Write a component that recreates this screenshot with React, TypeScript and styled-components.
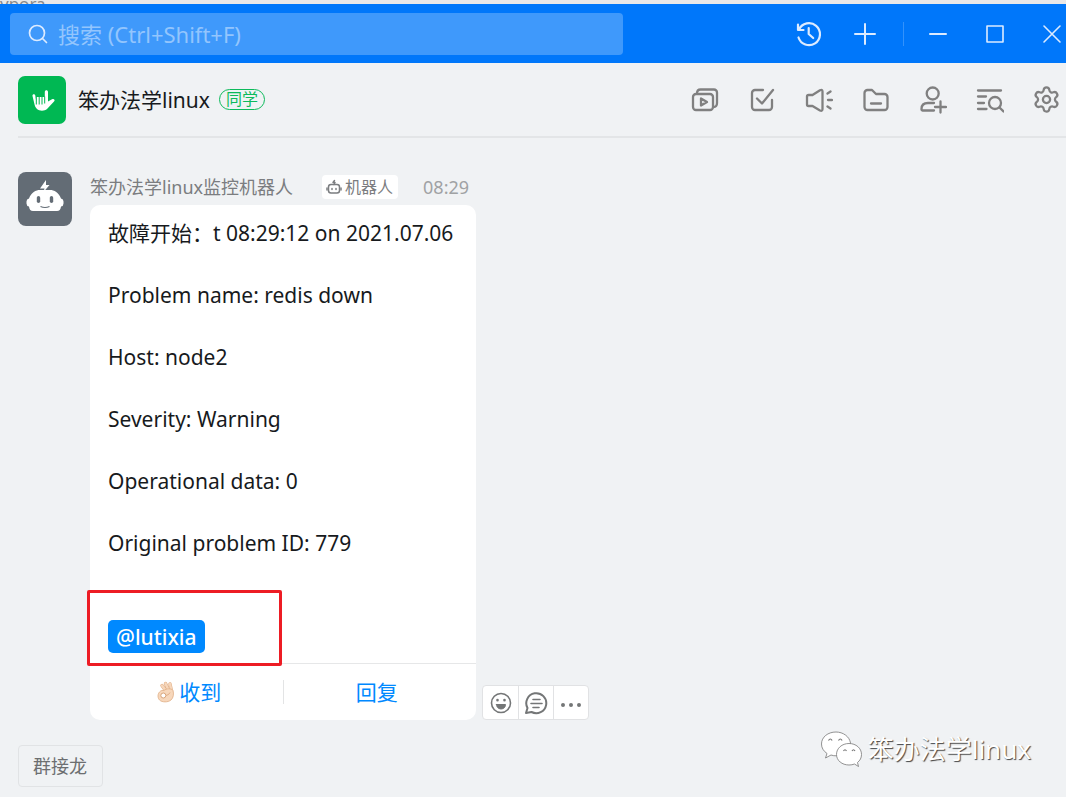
import React from "react";
import styled, { createGlobalStyle } from "styled-components";
import { Settings } from "lucide-react";

const Global = createGlobalStyle`
  * { box-sizing: border-box; }
  body {
    margin: 0;
    background: #f0f2f4;
    color: #171a1d;
    font-family: "Noto Sans", "Noto Sans CJK SC", sans-serif;
  }
  button, input { font: inherit; color: inherit; }
  svg { display: block; flex: none; }
`;

const Page = styled.div`
  min-height: 100vh;
  display: flex;
  flex-direction: column;
  position: relative;
  overflow: hidden;
`;

const BackWindow = styled.div`
  height: 4px;
  overflow: hidden;
  background: #e9e8e8;
  color: #8a8a8a;
  font-size: 17px;
  line-height: 8px;
`;

const TitleBar = styled.header`
  display: flex;
  align-items: center;
  justify-content: space-between;
  height: 59px;
  padding-left: 10px;
  background: #0077fa;
  color: #dcebff;
`;

const SearchBox = styled.label`
  flex: 0 1 613px;
  display: flex;
  align-items: center;
  gap: 10px;
  height: 42px;
  padding: 0 18px;
  border-radius: 4px;
  background: #3f99fb;
`;

const SearchInput = styled.input`
  flex: 1;
  min-width: 0;
  padding: 0;
  border: 0;
  outline: 0;
  background: transparent;
  font-size: 22px;
  &::placeholder { color: #93c5fd; opacity: 1; }
`;

const Controls = styled.div`
  display: flex;
  align-items: center;
  margin-right: -10px;
`;

const IconButton = styled.button<{ $w: number; $h?: number }>`
  display: flex;
  align-items: center;
  justify-content: center;
  width: ${(p) => p.$w}px;
  height: ${(p) => p.$h ?? 36}px;
  padding: 0;
  border: 0;
  background: transparent;
`;

const Separator = styled.span<{ $h: number; $color: string; $gap?: number }>`
  flex: none;
  width: 1px;
  height: ${(p) => p.$h}px;
  margin: 0 ${(p) => p.$gap ?? 0}px;
  background: ${(p) => p.$color};
`;

const ChatHeader = styled.div`
  display: flex;
  align-items: center;
  height: 75px;
  margin-left: 18px;
  border-bottom: 2px solid #e3e5e7;
`;

const ChatTitle = styled.h1`
  margin: 0 0 0 12px;
  font-size: 21px;
  line-height: 30px;
  font-weight: 400;
`;

const Pill = styled.span`
  margin-left: 9px;
  padding: 0 6px;
  border: 1px solid #0dba5b;
  border-radius: 11px;
  color: #0dba5b;
  font-size: 16px;
  line-height: 19px;
`;

const Tools = styled.div`
  display: flex;
  margin-left: auto;
  margin-right: -9px;
  color: #808080;
`;

const Message = styled.article`
  display: flex;
  gap: 18px;
  padding: 34px 18px 0;
`;

const MessageMain = styled.div`
  min-width: 0;
`;

const Meta = styled.div`
  display: flex;
  align-items: center;
  height: 30px;
  margin-bottom: 3px;
  color: #7b7d80;
  font-size: 18px;
  line-height: 26px;
`;

const BotTag = styled.span`
  display: flex;
  align-items: center;
  gap: 3px;
  height: 24px;
  margin-left: 29px;
  padding: 0 5px 0 4px;
  border-radius: 4px;
  background: #fff;
  font-size: 16px;
`;

const Time = styled.time`
  margin-left: 25px;
  color: #a0a2a4;
`;

const BubbleRow = styled.div`
  display: flex;
  align-items: flex-end;
  gap: 6px;
`;

const Bubble = styled.section`
  width: 386px;
  border-radius: 10px;
  background: #fff;
`;

const Body = styled.div`
  padding: 13px 18px 10px;
  border-bottom: 1px solid #e6e7e8;
  font-size: 21px;
  line-height: 31px;
`;

const Line = styled.p`
  margin: 0 0 31px;
  white-space: nowrap;
`;

const MentionLine = styled.div`
  position: relative;
  display: flex;
  margin-top: 61px;
`;

const Mention = styled.a`
  padding: 2px 8px 0;
  border-radius: 5px;
  background: #0089ff;
  color: #fff;
  font-weight: 500;
  text-decoration: none;
`;

const Highlight = styled.span`
  position: absolute;
  left: -21px;
  top: -30px;
  width: 195px;
  height: 76px;
  border: 3px solid #ed1c24;
  border-radius: 2px;
`;

const Actions = styled.div`
  display: flex;
  align-items: center;
  height: 56px;
`;

const Action = styled.button`
  flex: 1;
  display: flex;
  align-items: center;
  justify-content: center;
  gap: 4px;
  padding: 0;
  border: 0;
  background: transparent;
  color: #0089ff;
  font-size: 21px;
  line-height: 31px;
  &:first-child { padding-left: 6px; }
  &:last-child { padding-right: 6px; }
`;

const Reactions = styled.div`
  display: flex;
  border: 1px solid #e1e2e4;
  border-radius: 4px;
  background: #fff;
  color: #747677;
  button + button { border-left: 1px solid #e1e2e4; }
`;

const Footer = styled.footer`
  padding: 25px 18px 10px;
`;

const Shortcut = styled.button`
  height: 42px;
  padding: 0 15px 0 14px;
  border: 1px solid #e1e3e5;
  border-radius: 4px;
  background: transparent;
  color: #6c6e70;
  font-size: 18px;
  line-height: 26px;
`;

const Watermark = styled.div`
  position: absolute;
  right: 35px;
  bottom: 29px;
  display: flex;
  align-items: center;
  gap: 6px;
  color: #fff;
  font-size: 26px;
  line-height: 38px;
  text-shadow: 1px 1px 1px #444;
`;

const Draw = ({ children, size = 28, sw = 2 }: { children: React.ReactNode; size?: number; sw?: number }) => (
  <svg width={size} height={size} viewBox={`0 0 ${size} ${size}`} fill="none" stroke="currentColor"
    strokeWidth={sw} strokeLinecap="round" strokeLinejoin="round" aria-hidden="true">
    {children}
  </svg>
);

const tools = [
  { label: "直播", icon: <Draw sw={2.3}><rect x="2" y="8" width="20" height="16" rx="3" /><path d="M6 7.5C6 5 7 3.500 9.500 3.500H23a3 3 0 0 1 3 3V17c0 2.500-1 4-3.500 4M10 12.500v7l6-3.500z" /></Draw> },
  { label: "待办", icon: <Draw sw={2.3}><path d="M15 4H7a3 3 0 0 0-3 3v14a3 3 0 0 0 3 3h14a3 3 0 0 0 3-3v-7M9 12.500l5 5L25 4" /></Draw> },
  { label: "公告", icon: <Draw sw={2.3}><path d="M7.500 9H3.500Q2 9 2 10.500v8Q2 20 3.500 20H7.500L15 24.500Q17.500 25.500 17.500 23V5.500Q17.500 3 15 4.200zM22.500 7.500l3-2M23 14h4M22.500 20.500l3 2" /></Draw> },
  { label: "文件", icon: <Draw sw={2.3}><path d="M2.500 7a3 3 0 0 1 3-3H10l4 4h8.500a3 3 0 0 1 3 3v10a3 3 0 0 1-3 3h-17a3 3 0 0 1-3-3zM9 17.500h10" /></Draw> },
  { label: "添加成员", icon: <Draw sw={2.3}><circle cx="13.700" cy="7.500" r="6" /><path d="M15 17H9C5 17 2.500 19 2.500 23v.5q0 1 1 1H15M21.500 15.500v11M16 21h11" /></Draw> },
  { label: "搜索记录", icon: <Draw sw={2.3}><path d="M2 4.500h23M2 10.500h8M2 17h6M2 23h8.500M23.500 21.500l4 4" /><circle cx="19" cy="17" r="6" /></Draw> },
  { label: "设置", icon: <Settings size={29} strokeWidth={1.9} aria-hidden /> },
];

const lines = [
  "故障开始：t 08:29:12 on 2021.07.06",
  "Problem name: redis down",
  "Host: node2",
  "Severity: Warning",
  "Operational data: 0",
  "Original problem ID: 779",
];

const GroupLogo = () => (
  <svg width="48" height="48" viewBox="0 0 48 48" aria-hidden="true">
    <rect width="48" height="48" rx="7" fill="#00b853" />
    <path d="M14.500 20c-.4-2 2.300-2.500 2.800-.5l1 6V21h8.500v-5c0-2.300 3.200-2.300 3.200 0v9.500l4-2.300c2-1.100 3.500.9 2 2.400L29 33c-2.400 2.200-7.500 2.300-10 0-1.500-1.500-2.400-3.500-2.800-6z" fill="#fff" />
    <path d="M18.300 20.500v8M21.200 20.500v8M24 20.500v8M26.700 20.500v7" fill="none" stroke="#00b853" strokeWidth="1" />
  </svg>
);

const BotAvatar = () => (
  <svg width="54" height="54" viewBox="0 0 54 54" aria-hidden="true">
    <rect width="54" height="54" rx="8" fill="#636c75" />
    <path d="M28 8l-6 8.500h4.500L25.500 20l6-7H28z" fill="#fff" />
    <path d="M11 26.500C13 20.500 18 18 22 18h10c4 0 9 2.500 11 8.500q2.500.5 2.500 3v2q0 2.500-2.500 3-.5 4.500-4 4.500H15q-3.500 0-4-4.500-2.500-.5-2.500-3v-2q0-2.500 2.500-3z" fill="#fff" />
    <rect x="18.800" y="24" width="3.400" height="7" rx="1.700" fill="#636c75" />
    <rect x="31.800" y="24" width="3.400" height="7" rx="1.700" fill="#636c75" />
    <path d="M22.500 34.500q4.500 2 9 0" fill="none" stroke="#636c75" strokeWidth="1.200" />
  </svg>
);

const OkHand = () => (
  <svg width="18" height="22" viewBox="0 0 18 22" aria-hidden="true">
    <g fill="none" strokeLinecap="round">
      <path d="M9 10L5 4.500M11.500 9L8.500 2.500M14.500 10L13 3" stroke="#dfae86" strokeWidth="3.400" />
      <path d="M9 10L5 4.500M11.500 9L8.500 2.500M14.500 10L13 3" stroke="#f7d7bb" strokeWidth="2.400" />
    </g>
    <path d="M7 9.500c2-2 7.500-2.500 9 0 1 3 .5 7.500-2 9.500-3 2.500-9 2.500-11.500 0-2-2-2-6 0-8C4 9 6 9.500 7 9.500z" fill="#f7d7bb" stroke="#dfae86" strokeWidth=".8" />
    <circle cx="6.300" cy="14.500" r="2.500" fill="#fff" stroke="#d9a57b" strokeWidth="1" />
    <path d="M9 14.500q3-.5 4-3" fill="none" stroke="#d9a57b" strokeWidth=".8" />
  </svg>
);

const WechatLogo = () => (
  <svg width="42" height="38" viewBox="0 0 42 38" fill="#fff" stroke="#777" strokeWidth=".8" aria-hidden="true">
    <path d="M16 2C8 2 1.500 7 1.500 14c0 4 2 7 5.500 9.500L5.500 28l5.500-3q2.500 1 6 .8C30 25 31 17 30.500 13 29.500 6.500 23 2 16 2z" />
    <path d="M29 13.500c-7 0-12.500 4.700-12.500 11 0 6 5.500 10.500 12.500 10.500q3 0 5.500-1l4 2.500-1-4c2.500-2 4-4.500 4-8 0-6.300-5.500-11-12.500-11z" />
    <path d="M8.500 10.500q1.800-3 3.600 0M18.500 10.500q1.800-3 3.600 0M23.500 21q1.500-2.500 3 0M32 21q1.500-2.500 3 0" fill="none" strokeWidth="1.200" />
  </svg>
);

export default function App() {
  return (
    <Page>
      <Global />
      <BackWindow aria-hidden="true">ypora</BackWindow>
      <TitleBar>
        <SearchBox>
          <Draw size={20} sw={1.7}><circle cx="9" cy="9" r="7.500" /><path d="M14.500 14.500l4 4" /></Draw>
          <SearchInput type="search" aria-label="搜索" placeholder="搜索 (Ctrl+Shift+F)" />
        </SearchBox>
        <Controls>
          <IconButton $w={56} aria-label="历史记录">
            <Draw sw={2.2}><path d="M4 9.500A11 11 0 1 1 3.500 17.500M3 4.500v5.500h5.500M13.700 8v6l4.500 4" /></Draw>
          </IconButton>
          <IconButton $w={56} aria-label="新建"><Draw><path d="M4 14h20M14 4v20" /></Draw></IconButton>
          <Separator $h={24} $color="#3392fb" $gap={10} />
          <IconButton $w={48} aria-label="最小化"><Draw><path d="M6 14h16" /></Draw></IconButton>
          <IconButton $w={66} aria-label="最大化"><Draw sw={1.6}><rect x="6" y="6" width="16" height="16" /></Draw></IconButton>
          <IconButton $w={48} aria-label="关闭"><Draw sw={1.6}><path d="M6 6l16 16M22 6L6 22" /></Draw></IconButton>
        </Controls>
      </TitleBar>
      <ChatHeader>
        <GroupLogo />
        <ChatTitle>笨办法学linux</ChatTitle>
        <Pill>同学</Pill>
        <Tools>
          {tools.map((t) => (
            <IconButton key={t.label} $w={57} aria-label={t.label}>{t.icon}</IconButton>
          ))}
        </Tools>
      </ChatHeader>
      <Message>
        <BotAvatar />
        <MessageMain>
          <Meta>
            <span>笨办法学linux监控机器人</span>
            <BotTag>
              <Draw size={16} sw={1.5}><rect x="2.500" y="5.500" width="11" height="8.500" rx="2.500" /><path d="M8.500 1.500L7 3.500h2L8 5.500M1 9v2M15 9v2M6 9.500v1M10 9.500v1" /></Draw>
              机器人
            </BotTag>
            <Time>08:29</Time>
          </Meta>
          <BubbleRow>
            <Bubble>
              <Body>
                {lines.map((l) => <Line key={l}>{l}</Line>)}
                <MentionLine>
                  <Mention href="#lutixia">@lutixia</Mention>
                  <Highlight />
                </MentionLine>
              </Body>
              <Actions>
                <Action><OkHand />收到</Action>
                <Separator $h={24} $color="#e3e4e5" />
                <Action>回复</Action>
              </Actions>
            </Bubble>
            <Reactions>
              <IconButton $w={35} $h={33} aria-label="表情">
                <Draw size={22} sw={1.6}><circle cx="11" cy="11" r="9.500" /><path d="M6.500 12.500h9c0 6-9 6-9 0z" fill="currentColor" strokeWidth="1" /><path d="M7.500 8v.2M14.500 8v.2" strokeWidth="2.600" /></Draw>
              </IconButton>
              <IconButton $w={35} $h={33} aria-label="回复消息">
                <Draw size={24} sw={2}><path d="M2 22l1.500-5a10 10 0 1 1 4 4z" /><path d="M9 8.500h7M7 12.500h11M9 16.500h6" strokeWidth="1.600" /></Draw>
              </IconButton>
              <IconButton $w={35} $h={33} aria-label="更多">
                <Draw size={22} sw={4}><path d="M3 13v.1M11 13v.1M19 13v.1" /></Draw>
              </IconButton>
            </Reactions>
          </BubbleRow>
        </MessageMain>
      </Message>
      <Footer><Shortcut>群接龙</Shortcut></Footer>
      <Watermark><WechatLogo /><span>笨办法学linux</span></Watermark>
    </Page>
  );
}
